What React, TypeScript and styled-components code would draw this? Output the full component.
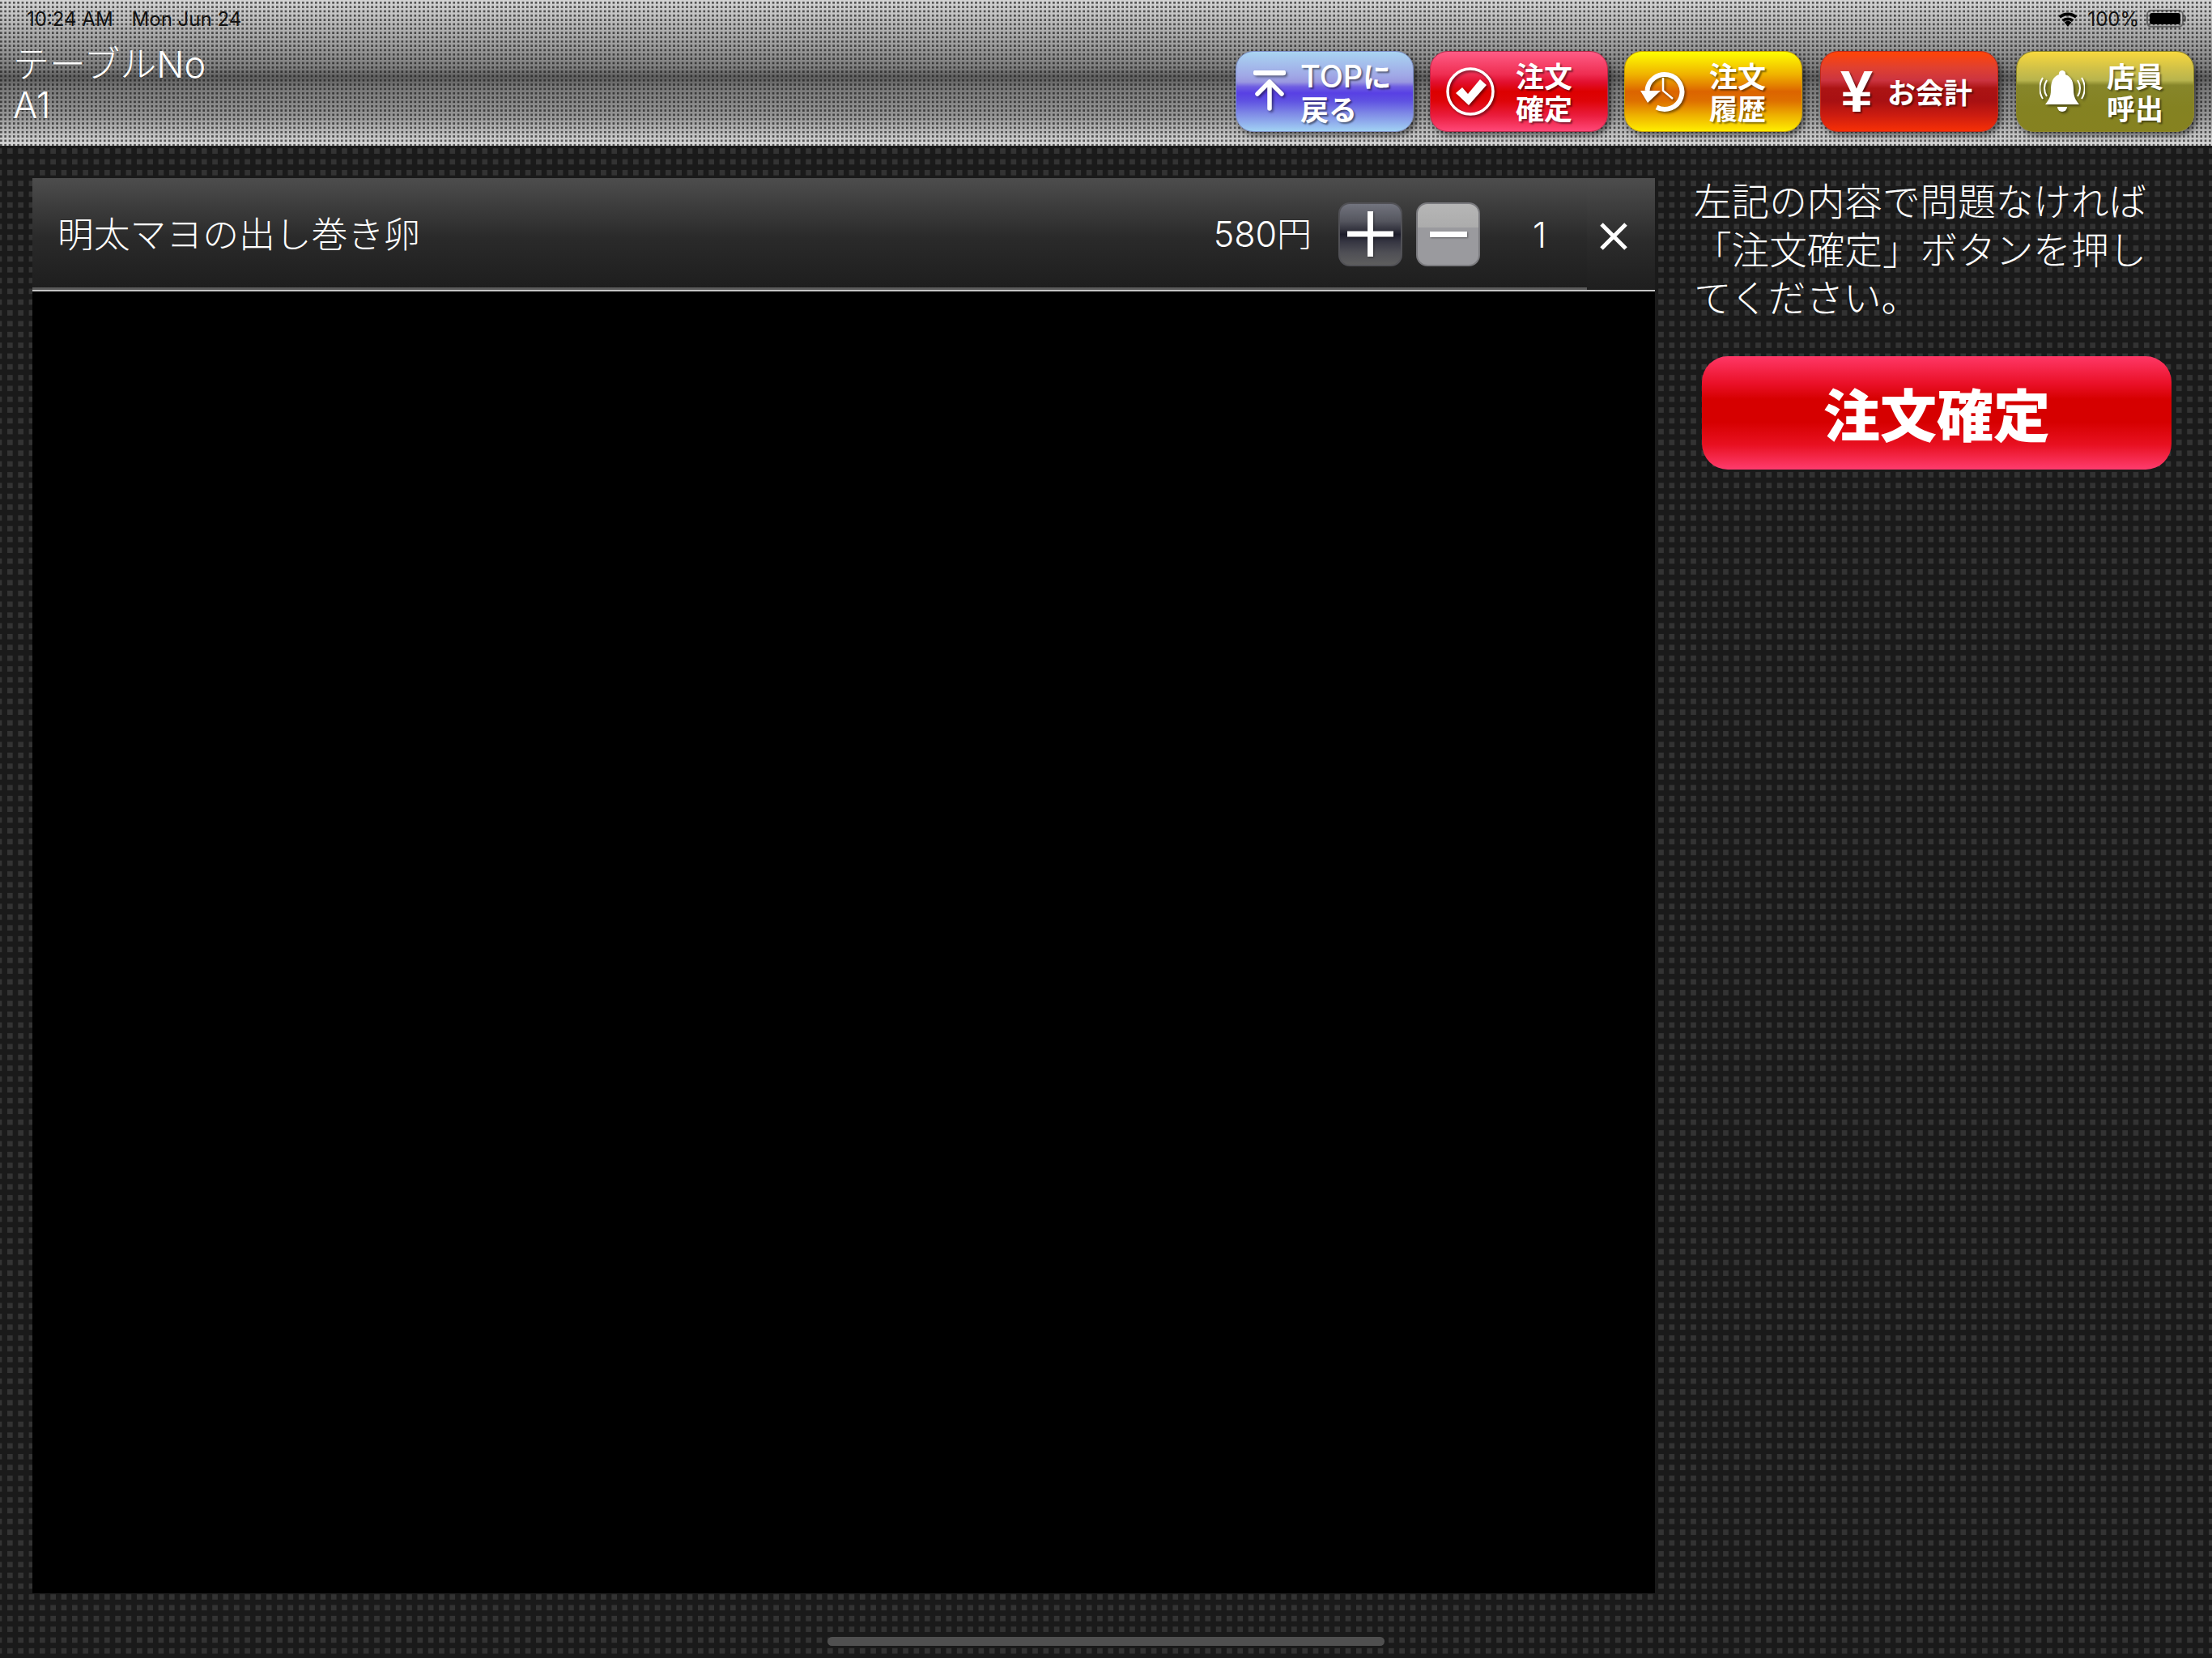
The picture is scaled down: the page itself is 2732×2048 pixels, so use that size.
import React from "react";
import styled, { createGlobalStyle } from "styled-components";

const FONT = `Inter, "Noto Sans CJK JP", "Noto Sans", sans-serif`;
const BOLD_FONT = `"Noto Sans CJK JP", "Noto Sans", sans-serif`;

const Global = createGlobalStyle`
  html, body { margin: 0; padding: 0; background: #1a1a1a; }
  #root { width: 2732px; height: 2048px; overflow: hidden; }
`;

const Page = styled.div`
  position: relative;
  width: 2732px;
  height: 2048px;
  display: flex;
  flex-direction: column;
  font-family: ${FONT};
  background-color: #1a1a1a;
  background-image: conic-gradient(#333333 25%, transparent 0);
  background-size: 13.33px 13.33px;
  background-position: 2.33px 10px;
`;

const Header = styled.header`
  height: 180px;
  flex: none;
  display: flex;
  flex-direction: column;
  background-image:
    conic-gradient(rgba(25, 25, 25, 0.68) 25%, transparent 0),
    linear-gradient(180deg, #d4d4d4 0%, #a8a8a8 25%, #7c7c7c 47%, #5e5e5e 53%, #787878 60%, #969696 80%, #dadada 100%);
  background-size: 5.33px 5.33px, 100% 100%;
  background-position: 2.67px 2px, 0 0;
`;

const StatusBar = styled.div`
  height: 40px;
  padding: 0 35px 0 33px;
  display: flex;
  align-items: center;
  justify-content: space-between;
  font-size: 24px;
  color: #111;
`;

const StatusGroup = styled.div`
  display: flex;
  align-items: center;
  gap: ${(p: { $gap: number }) => p.$gap}px;
  padding-top: 6px;
`;

const Battery = styled.div`
  position: relative;
  width: 46px;
  height: 22px;
  box-sizing: border-box;
  border: 2px solid rgba(40, 40, 40, 0.55);
  border-radius: 6px;
  padding: 2px;
  &::before {
    content: "";
    display: block;
    height: 100%;
    background: #000;
    border-radius: 3px;
  }
  &::after {
    content: "";
    position: absolute;
    right: -5px;
    top: 5px;
    width: 3px;
    height: 8px;
    background: rgba(40, 40, 40, 0.55);
    border-radius: 0 2px 2px 0;
  }
`;

const Bar = styled.div`
  flex: 1;
  display: flex;
  justify-content: space-between;
  align-items: flex-start;
  padding-right: 22px;
`;

const TableInfo = styled.div`
  margin: 15px 0 0 16px;
  font-size: 45px;
  line-height: 50px;
  font-weight: 300;
  color: #fff;
  text-shadow: 0 1px 1px rgba(0, 0, 0, 0.35);
`;

const Nav = styled.nav`
  margin-top: 23px;
  display: flex;
`;

const NavButton = styled.button<{ $bg: string; $pad: number; $gap: number; $edge: string; $after: number }>`
  width: 220px;
  height: 100px;
  box-sizing: border-box;
  border: 1px solid ${(p) => p.$edge};
  border-radius: 22px;
  margin-right: ${(p) => p.$after}px;
  padding: 0 0 0 ${(p) => p.$pad}px;
  display: flex;
  align-items: center;
  gap: ${(p) => p.$gap}px;
  background: ${(p) => p.$bg};
  box-shadow: 3px 4px 7px rgba(0, 0, 0, 0.5);
  cursor: pointer;
  svg { flex: none; filter: drop-shadow(2px 2px 1.5px rgba(0, 0, 0, 0.45)); }
`;

const NavLabel = styled.span`
  font-family: ${BOLD_FONT};
  font-size: 35px;
  line-height: 40px;
  font-weight: 700;
  color: #fff;
  text-align: left;
  white-space: nowrap;
  text-shadow: 2px 2px 2px rgba(0, 0, 0, 0.45);
`;

const LatinLabel = styled.span`
  font-family: Inter, sans-serif;
  font-size: 38px;
  font-weight: 500;
`;

const YenMark = styled.span`
  width: 38px;
  flex: none;
  text-align: center;
  font-family: "Liberation Sans", sans-serif;
  font-size: 72px;
  line-height: 1;
  font-weight: 700;
  color: #fff;
  text-shadow: 2px 2px 2px rgba(0, 0, 0, 0.45);
`;

const Main = styled.main`
  flex: 1;
  display: flex;
  align-items: flex-start;
  padding: 40px 0 0 40px;
`;

const List = styled.section`
  width: 2004px;
  height: 1748px;
  flex: none;
  background: #000;
`;

const Row = styled.div`
  height: 140px;
  box-sizing: border-box;
  display: flex;
  border-bottom: 2px solid #c4c4c4;
`;

const RowMain = styled.div`
  flex: 1;
  display: flex;
  align-items: center;
  padding: 3px 0 0 31px;
  border-bottom: 3px solid #5a5a5a;
  color: #fff;
  background: linear-gradient(180deg, #4d4d4d 0%, #2a2a2a 55%, #1e1e1e 100%);
`;

const CloseCell = styled.button`
  width: 84px;
  flex: none;
  border: 0;
  padding: 6px 18px 0 0;
  display: flex;
  align-items: center;
  justify-content: center;
  background: linear-gradient(180deg, #4d4d4d 0%, #2c2c2c 55%, #1e1e1e 100%);
  cursor: pointer;
`;

const ItemName = styled.span`
  flex: 1;
  font-size: 44.8px;
  font-weight: 300;
  color: #fff;
  white-space: nowrap;
  margin-bottom: 6px;
`;

const Price = styled.span`
  font-size: 43px;
  font-weight: 300;
  margin: 0 33px 6px 0;
`;

const StepButton = styled.button<{ $kind: "plus" | "minus" }>`
  width: 79px;
  height: 79px;
  flex: none;
  box-sizing: border-box;
  padding: 0;
  border-radius: 14px;
  display: flex;
  align-items: center;
  justify-content: center;
  margin-right: ${(p) => (p.$kind === "plus" ? 17 : 0)}px;
  border: 2px solid ${(p) => (p.$kind === "plus" ? "#515156" : "#7a7a7e")};
  background: ${(p) =>
    p.$kind === "plus"
      ? "linear-gradient(180deg, #72747e 0%, #55565f 28%, #34343f 42%, #1c1c2a 50%, #363642 62%, #4f4f55 80%, #5e5e5e 100%)"
      : "linear-gradient(180deg, #b6b6b6 0%, #acacac 38%, #9a9a9e 38.5%, #9a9a9e 100%)"};
  cursor: pointer;
  svg { filter: drop-shadow(1px 1px 1px rgba(0, 0, 0, 0.4)); }
`;

const Quantity = styled.span`
  flex: none;
  width: 82px;
  text-align: right;
  font-size: 43px;
  font-weight: 300;
  margin-right: 50px;
  padding-top: 2px;
`;

const Side = styled.aside`
  flex: none;
  width: 640px;
  margin-left: 48px;
  display: flex;
  flex-direction: column;
  align-items: flex-start;
`;

const Notice = styled.p`
  width: 575px;
  margin: 0;
  font-size: 46.6px;
  line-height: 59.5px;
  font-weight: 300;
  color: #fff;
`;

const ConfirmButton = styled.button`
  margin: 41px 0 0 10px;
  width: 580px;
  height: 140px;
  border: 0;
  padding: 0;
  border-radius: 32px;
  font-family: ${BOLD_FONT};
  font-size: 70px;
  font-weight: 900;
  line-height: 1;
  color: #fff;
  background: linear-gradient(180deg, #ff3866 0%, #ea1028 24%, #d60000 38%, #d60000 58%, #e81020 78%, #ff3c6e 100%);
  cursor: pointer;
`;

const HomeIndicator = styled.div`
  position: absolute;
  left: 1022px;
  top: 2022px;
  width: 688px;
  height: 11px;
  border-radius: 6px;
  background: #505050;
`;

const WifiIcon = () => (
  <svg width="30" height="20" viewBox="0 0 30 20">
    <path d="M15 20 L10.6 14.6 A7 7 0 0 1 19.4 14.6 Z" fill="#000" />
    <path d="M7.6 11.2 A11.4 11.4 0 0 1 22.4 11.2 L20 14 A8 8 0 0 0 10 14 Z" fill="#000" />
    <path d="M3.6 6.8 A17 17 0 0 1 26.4 6.8 L24 9.6 A13.4 13.4 0 0 0 6 9.6 Z" fill="#000" />
  </svg>
);

const TopIcon = () => (
  <svg width="40" height="52" viewBox="0 0 40 52" fill="none" stroke="#fff" strokeLinecap="round" strokeLinejoin="round">
    <path d="M3 3 H37" strokeWidth="6.5" />
    <path d="M20 47 V15 M5 29 L20 14 L35 29" strokeWidth="5.5" />
  </svg>
);

const CheckIcon = () => (
  <svg width="60" height="60" viewBox="0 0 60 60" fill="none">
    <circle cx="30" cy="30" r="28" stroke="#fff" strokeWidth="3.5" />
    <path d="M12 32 L20 25 L27 33 L42 15 L50 22 L28 47 Z" fill="#fff" />
  </svg>
);

const HistoryIcon = () => (
  <svg width="56" height="52" viewBox="0 0 56 52" fill="none" stroke="#fff">
    <path d="M8.5 25 A21.5 21.5 0 1 1 20 45.5" strokeWidth="6" />
    <path d="M0 25 L25 25 L9 40 Z" fill="#fff" stroke="none" />
    <path d="M28 9 V25 L40 35" strokeWidth="2.5" />
  </svg>
);

const BellIcon = () => (
  <svg width="56" height="52" viewBox="0 0 56 52" fill="none">
    <path d="M28 0 A4 4 0 0 1 32 5 C40 8 42 15 42 24 C42 33 45 37 49 42 H7 C11 37 14 33 14 24 C14 15 16 8 24 5 A4 4 0 0 1 28 0 Z" fill="#fff" />
    <path d="M22 45 H34 A6 6 0 0 1 22 45 Z" fill="#fff" />
    <path d="M9 12 C5 18 5 26 9 32 M4 9 C-1 17 -1 27 4 35 M47 12 C51 18 51 26 47 32 M52 9 C57 17 57 27 52 35" stroke="#fff" strokeWidth="2" />
  </svg>
);

const PlusGlyph = () => (
  <svg width="57" height="56" viewBox="0 0 57 56">
    <path d="M25 0 H32 V24.5 H57 V31.5 H32 V56 H25 V31.5 H0 V24.5 H25 Z" fill="#fff" />
  </svg>
);

const MinusGlyph = () => (
  <svg width="46" height="7" viewBox="0 0 46 7">
    <rect width="46" height="7" fill="#fff" />
  </svg>
);

const CloseGlyph = () => (
  <svg width="34" height="34" viewBox="0 0 34 34" stroke="#fff" strokeWidth="5">
    <path d="M2 2 L32 32 M32 2 L2 32" />
  </svg>
);

const NAV = {
  top: "linear-gradient(180deg, #a9d4f2 0%, #a0a8e6 30%, #9a98e0 38%, #6f5ee2 44%, #5840e4 52%, #5f52e2 62%, #7f8ae6 78%, #a2d2f4 100%)",
  confirm: "linear-gradient(180deg, #ff5c86 0%, #ef2e52 28%, #e21030 38%, #dc0000 50%, #de0408 62%, #ea1c3c 80%, #ff4878 100%)",
  history: "linear-gradient(180deg, #ffff00 0%, #f0b400 28%, #e68a00 40%, #dc6400 50%, #de7000 62%, #eeb000 80%, #ffee00 100%)",
  bill: "linear-gradient(180deg, #ff4406 0%, #e04030 20%, #cc3440 36%, #ac1414 46%, #a81012 62%, #cc1c10 80%, #f73006 100%)",
  call: "linear-gradient(180deg, #f8d83e 0%, #cfc048 22%, #b8b44e 36%, #87862a 42%, #848222 70%, #868220 100%)",
};

export default function App() {
  return (
    <Page>
      <Global />
      <Header>
        <StatusBar>
          <StatusGroup $gap={23}>
            <span>10:24 AM</span>
            <span>Mon Jun 24</span>
          </StatusGroup>
          <StatusGroup $gap={9}>
            <WifiIcon />
            <span>100%</span>
            <Battery />
          </StatusGroup>
        </StatusBar>
        <Bar>
          <TableInfo>
            テーブルNo
            <br />
            A1
          </TableInfo>
          <Nav>
            <NavButton $bg={NAV.top} $pad={21} $gap={18} $edge="#7d8fc8" $after={20}>
              <TopIcon />
              <NavLabel>
                <LatinLabel>TOP</LatinLabel>に
                <br />
                戻る
              </NavLabel>
            </NavButton>
            <NavButton $bg={NAV.confirm} $pad={19} $gap={26} $edge="#b82848" $after={20}>
              <CheckIcon />
              <NavLabel>
                注文
                <br />
                確定
              </NavLabel>
            </NavButton>
            <NavButton $bg={NAV.history} $pad={19} $gap={29} $edge="#c8a000" $after={22}>
              <HistoryIcon />
              <NavLabel>
                注文
                <br />
                履歴
              </NavLabel>
            </NavButton>
            <NavButton $bg={NAV.bill} $pad={24} $gap={20} $edge="#c02818" $after={22}>
              <YenMark>¥</YenMark>
              <NavLabel>お会計</NavLabel>
            </NavButton>
            <NavButton $bg={NAV.call} $pad={28} $gap={27} $edge="#8c8428" $after={0}>
              <BellIcon />
              <NavLabel>
                店員
                <br />
                呼出
              </NavLabel>
            </NavButton>
          </Nav>
        </Bar>
      </Header>
      <Main>
        <List>
          <Row>
            <RowMain>
              <ItemName>明太マヨの出し巻き卵</ItemName>
              <Price>580円</Price>
              <StepButton $kind="plus">
                <PlusGlyph />
              </StepButton>
              <StepButton $kind="minus">
                <MinusGlyph />
              </StepButton>
              <Quantity>1</Quantity>
            </RowMain>
            <CloseCell>
              <CloseGlyph />
            </CloseCell>
          </Row>
        </List>
        <Side>
          <Notice>左記の内容で問題なければ「注文確定」ボタンを押してください。</Notice>
          <ConfirmButton>注文確定</ConfirmButton>
        </Side>
      </Main>
      <HomeIndicator />
    </Page>
  );
}
